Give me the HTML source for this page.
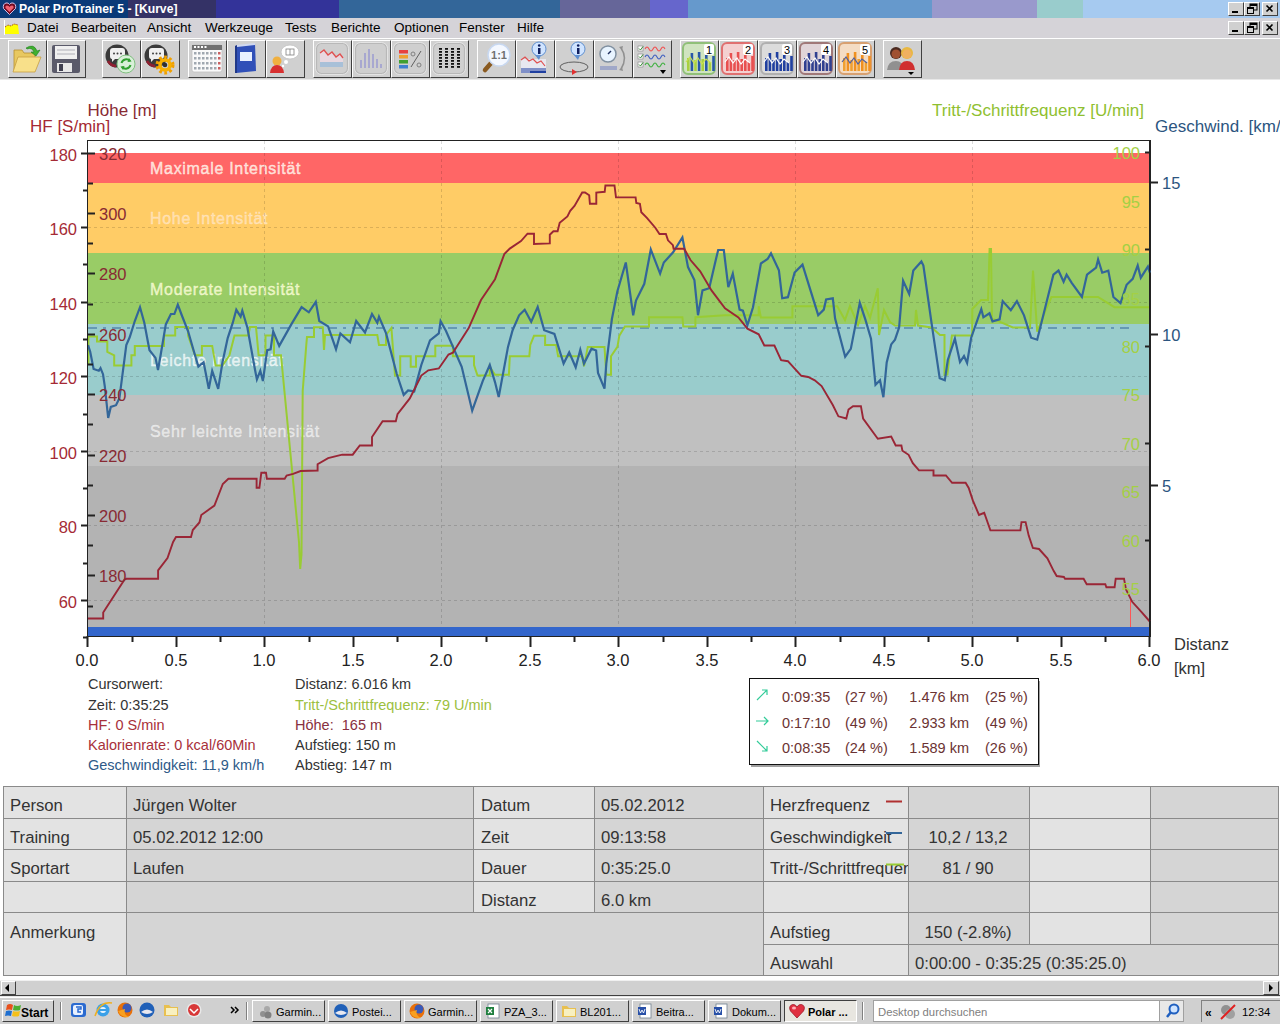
<!DOCTYPE html><html><head><meta charset="utf-8"><style>
html,body{margin:0;padding:0;width:1280px;height:1024px;overflow:hidden;background:#fff;font-family:"Liberation Sans", sans-serif;}
.t{position:absolute;white-space:nowrap;line-height:1;}
.r{position:absolute;box-sizing:border-box;}
svg{position:absolute;left:0;top:0;}
</style></head><body>
<div class="r" style="left:0px;top:0px;width:128px;height:18px;background:#0a3a78;"></div>
<div class="r" style="left:128px;top:0px;width:88px;height:18px;background:#343266;"></div>
<div class="r" style="left:216px;top:0px;width:123px;height:18px;background:#333399;"></div>
<div class="r" style="left:339px;top:0px;width:221px;height:18px;background:#336699;"></div>
<div class="r" style="left:560px;top:0px;width:90px;height:18px;background:#666699;"></div>
<div class="r" style="left:650px;top:0px;width:38px;height:18px;background:#6666cc;"></div>
<div class="r" style="left:688px;top:0px;width:244px;height:18px;background:#6699cc;"></div>
<div class="r" style="left:932px;top:0px;width:105px;height:18px;background:#9999cc;"></div>
<div class="r" style="left:1037px;top:0px;width:46px;height:18px;background:#99cccc;"></div>
<div class="r" style="left:1083px;top:0px;width:197px;height:18px;background:#a6caf0;"></div>
<svg width="18" height="18" style="left:0px;top:0px"><path d="M9.5 14.5 L3.5 8.5 Q2.5 4 6 3 Q8.5 2.5 9.5 4.5 Q10.5 2.5 13 3 Q16.5 4 15.5 8.5 Z" fill="#700a20" stroke="#d0c0e8" stroke-width="1"/><path d="M9.5 12 L5.5 8 Q5 5.5 7 5.5 Q9 5.5 9.5 7 Q10 5.5 12 5.5 Q14 5.5 13.5 8 Z" fill="#f06070"/></svg>
<div class="t" style="left:19px;top:3.17px;font-size:12.2px;color:#fff;font-weight:bold;">Polar ProTrainer 5 - [Kurve]</div>
<div class="r" style="left:0px;top:18px;width:1280px;height:20px;background:#d5d3d8;"></div>
<div class="r" style="left:1228px;top:2px;width:16px;height:14px;background:#d0d0d0;border-top:1px solid #fff;border-left:1px solid #fff;border-right:1px solid #404040;border-bottom:1px solid #404040;"></div>
<div class="r" style="left:1244px;top:2px;width:16px;height:14px;background:#d0d0d0;border-top:1px solid #fff;border-left:1px solid #fff;border-right:1px solid #404040;border-bottom:1px solid #404040;"></div>
<div class="r" style="left:1262px;top:2px;width:16px;height:14px;background:#d0d0d0;border-top:1px solid #fff;border-left:1px solid #fff;border-right:1px solid #404040;border-bottom:1px solid #404040;"></div>
<svg width="60" height="16" style="left:1220px;top:2px"><rect x="12" y="9" width="6" height="2" fill="#000"/><rect x="30" y="2" width="7" height="6" fill="none" stroke="#000" stroke-width="1"/><rect x="30" y="2" width="7" height="2" fill="#000"/><rect x="27.5" y="5.5" width="6" height="6" fill="#d0d0d0" stroke="#000" stroke-width="1"/><rect x="27" y="5" width="7" height="2" fill="#000"/><path d="M46.5 3.5 L52.5 9.5 M52.5 3.5 L46.5 9.5" stroke="#000" stroke-width="1.6"/></svg>
<div class="r" style="left:1228px;top:21px;width:16px;height:14px;background:#d0d0d0;border-top:1px solid #fff;border-left:1px solid #fff;border-right:1px solid #404040;border-bottom:1px solid #404040;"></div>
<div class="r" style="left:1244px;top:21px;width:16px;height:14px;background:#d0d0d0;border-top:1px solid #fff;border-left:1px solid #fff;border-right:1px solid #404040;border-bottom:1px solid #404040;"></div>
<div class="r" style="left:1262px;top:21px;width:16px;height:14px;background:#d0d0d0;border-top:1px solid #fff;border-left:1px solid #fff;border-right:1px solid #404040;border-bottom:1px solid #404040;"></div>
<svg width="60" height="16" style="left:1220px;top:21px"><rect x="12" y="9" width="6" height="2" fill="#000"/><rect x="30" y="2" width="7" height="6" fill="none" stroke="#000" stroke-width="1"/><rect x="30" y="2" width="7" height="2" fill="#000"/><rect x="27.5" y="5.5" width="6" height="6" fill="#d0d0d0" stroke="#000" stroke-width="1"/><rect x="27" y="5" width="7" height="2" fill="#000"/><path d="M46.5 3.5 L52.5 9.5 M52.5 3.5 L46.5 9.5" stroke="#000" stroke-width="1.6"/></svg>
<div class="r" style="left:0px;top:38px;width:1280px;height:1px;background:#ffffff;"></div>
<svg width="22" height="18" style="left:0px;top:19px"><rect x="4" y="1" width="1" height="15" fill="#fff"/><path d="M5 8 L8 6 L11 7 L14 5 L18 6 L19 15 L5 15 Z" fill="#ffff00"/><path d="M5 8 L8 6 L11 7 L14 5 L18 6" stroke="#993300" stroke-width="1" fill="none" stroke-dasharray="1 1"/></svg>
<div class="t" style="left:27px;top:20.77px;font-size:13.5px;color:#000;font-weight:normal;">Datei</div>
<div class="t" style="left:71px;top:20.77px;font-size:13.5px;color:#000;font-weight:normal;">Bearbeiten</div>
<div class="t" style="left:147px;top:20.77px;font-size:13.5px;color:#000;font-weight:normal;">Ansicht</div>
<div class="t" style="left:205px;top:20.77px;font-size:13.5px;color:#000;font-weight:normal;">Werkzeuge</div>
<div class="t" style="left:285px;top:20.77px;font-size:13.5px;color:#000;font-weight:normal;">Tests</div>
<div class="t" style="left:331px;top:20.77px;font-size:13.5px;color:#000;font-weight:normal;">Berichte</div>
<div class="t" style="left:394px;top:20.77px;font-size:13.5px;color:#000;font-weight:normal;">Optionen</div>
<div class="t" style="left:459px;top:20.77px;font-size:13.5px;color:#000;font-weight:normal;">Fenster</div>
<div class="t" style="left:517px;top:20.77px;font-size:13.5px;color:#000;font-weight:normal;">Hilfe</div>
<div class="r" style="left:0px;top:39px;width:1280px;height:41px;background:#d0d0d0;"></div>
<div class="r" style="left:0px;top:79px;width:1280px;height:1px;background:#e8e8e8;"></div>
<div class="r" style="left:8px;top:40px;width:39px;height:38px;background:#d0d0d0;border-top:1px solid #fff;border-left:1px solid #fff;border-right:1px solid #404040;border-bottom:1px solid #404040;"></div>
<div class="r" style="left:47px;top:40px;width:39px;height:38px;background:#d0d0d0;border-top:1px solid #fff;border-left:1px solid #fff;border-right:1px solid #404040;border-bottom:1px solid #404040;"></div>
<div class="r" style="left:102px;top:40px;width:39px;height:38px;background:#d0d0d0;border-top:1px solid #fff;border-left:1px solid #fff;border-right:1px solid #404040;border-bottom:1px solid #404040;"></div>
<div class="r" style="left:141px;top:40px;width:39px;height:38px;background:#d0d0d0;border-top:1px solid #fff;border-left:1px solid #fff;border-right:1px solid #404040;border-bottom:1px solid #404040;"></div>
<div class="r" style="left:188px;top:40px;width:39px;height:38px;background:#d0d0d0;border-top:1px solid #fff;border-left:1px solid #fff;border-right:1px solid #404040;border-bottom:1px solid #404040;"></div>
<div class="r" style="left:227px;top:40px;width:39px;height:38px;background:#d0d0d0;border-top:1px solid #fff;border-left:1px solid #fff;border-right:1px solid #404040;border-bottom:1px solid #404040;"></div>
<div class="r" style="left:266px;top:40px;width:39px;height:38px;background:#d0d0d0;border-top:1px solid #fff;border-left:1px solid #fff;border-right:1px solid #404040;border-bottom:1px solid #404040;"></div>
<div class="r" style="left:313px;top:40px;width:39px;height:38px;background:#d0d0d0;border-top:1px solid #fff;border-left:1px solid #fff;border-right:1px solid #404040;border-bottom:1px solid #404040;"></div>
<div class="r" style="left:352px;top:40px;width:39px;height:38px;background:#d0d0d0;border-top:1px solid #fff;border-left:1px solid #fff;border-right:1px solid #404040;border-bottom:1px solid #404040;"></div>
<div class="r" style="left:391px;top:40px;width:39px;height:38px;background:#d0d0d0;border-top:1px solid #fff;border-left:1px solid #fff;border-right:1px solid #404040;border-bottom:1px solid #404040;"></div>
<div class="r" style="left:430px;top:40px;width:39px;height:38px;background:#d0d0d0;border-top:1px solid #fff;border-left:1px solid #fff;border-right:1px solid #404040;border-bottom:1px solid #404040;"></div>
<div class="r" style="left:477px;top:40px;width:39px;height:38px;background:#d0d0d0;border-top:1px solid #fff;border-left:1px solid #fff;border-right:1px solid #404040;border-bottom:1px solid #404040;"></div>
<div class="r" style="left:516px;top:40px;width:39px;height:38px;background:#d0d0d0;border-top:1px solid #fff;border-left:1px solid #fff;border-right:1px solid #404040;border-bottom:1px solid #404040;"></div>
<div class="r" style="left:555px;top:40px;width:39px;height:38px;background:#d0d0d0;border-top:1px solid #fff;border-left:1px solid #fff;border-right:1px solid #404040;border-bottom:1px solid #404040;"></div>
<div class="r" style="left:594px;top:40px;width:39px;height:38px;background:#d0d0d0;border-top:1px solid #fff;border-left:1px solid #fff;border-right:1px solid #404040;border-bottom:1px solid #404040;"></div>
<div class="r" style="left:633px;top:40px;width:39px;height:38px;background:#d0d0d0;border-top:1px solid #fff;border-left:1px solid #fff;border-right:1px solid #404040;border-bottom:1px solid #404040;"></div>
<div class="r" style="left:680px;top:40px;width:39px;height:38px;background:#d0d0d0;border-top:1px solid #fff;border-left:1px solid #fff;border-right:1px solid #404040;border-bottom:1px solid #404040;"></div>
<div class="r" style="left:719px;top:40px;width:39px;height:38px;background:#d0d0d0;border-top:1px solid #fff;border-left:1px solid #fff;border-right:1px solid #404040;border-bottom:1px solid #404040;"></div>
<div class="r" style="left:758px;top:40px;width:39px;height:38px;background:#d0d0d0;border-top:1px solid #fff;border-left:1px solid #fff;border-right:1px solid #404040;border-bottom:1px solid #404040;"></div>
<div class="r" style="left:797px;top:40px;width:39px;height:38px;background:#d0d0d0;border-top:1px solid #fff;border-left:1px solid #fff;border-right:1px solid #404040;border-bottom:1px solid #404040;"></div>
<div class="r" style="left:836px;top:40px;width:39px;height:38px;background:#d0d0d0;border-top:1px solid #fff;border-left:1px solid #fff;border-right:1px solid #404040;border-bottom:1px solid #404040;"></div>
<div class="r" style="left:883px;top:40px;width:39px;height:38px;background:#d0d0d0;border-top:1px solid #fff;border-left:1px solid #fff;border-right:1px solid #404040;border-bottom:1px solid #404040;"></div>
<svg width="1280" height="90" style="left:0;top:0"><g transform="translate(8,40)"><path d="M6 10 L14 10 L16 13 L27 13 L27 30 L6 30 Z" fill="#e8c860" stroke="#b89030" stroke-width="0.8"/><path d="M5 32 L10 17 L33 17 L27 32 Z" fill="#f8e08a" stroke="#c8a040" stroke-width="0.8"/><path d="M18 8 Q26 3 29 11 L32 10 L28 16 L23 12 L26 12 Q24 7 19 9 Z" fill="#40b030" stroke="#208020" stroke-width="0.6"/></g><g transform="translate(47,40)"><rect x="5" y="5" width="28" height="28" rx="2" fill="#5a5a6a"/><rect x="8" y="6" width="22" height="13" fill="#f0f0f0"/><line x1="10" y1="10" x2="28" y2="10" stroke="#b0b0b8" stroke-width="1"/><line x1="10" y1="14" x2="28" y2="14" stroke="#b0b0b8" stroke-width="1"/><rect x="10" y="23" width="15" height="9" fill="#e8e8e8"/><rect x="12" y="24" width="4" height="7" fill="#404050"/></g><g transform="translate(102,40)"><circle cx="15" cy="16" r="11.5" fill="#3a3a3a"/><path d="M8 11 Q8 8 11 8 L20 8 Q23 8 23 11 L23 16 Q23 19 20 19 L13 19 L10 22 L10 19 Q8 19 8 16 Z" fill="#f0f0f0"/><circle cx="12" cy="13.5" r="1" fill="#404040"/><circle cx="15.5" cy="13.5" r="1" fill="#404040"/><circle cx="19" cy="13.5" r="1" fill="#404040"/><path d="M6 21 Q9 26 14 26" stroke="#902030" stroke-width="2.5" fill="none"/><circle cx="24" cy="24" r="9" fill="#d8f0d8" stroke="#80c080" stroke-width="1"/><path d="M19.5 23 A5 5 0 0 1 28 21 M28.5 25 A5 5 0 0 1 20 27" stroke="#30a030" stroke-width="2" fill="none"/><path d="M27 18 L29.5 21.5 L25.5 22 Z M21 30 L18.5 26.5 L22.5 26 Z" fill="#30a030"/></g><g transform="translate(141,40)"><circle cx="15" cy="16" r="11.5" fill="#3a3a3a"/><path d="M8 11 Q8 8 11 8 L20 8 Q23 8 23 11 L23 16 Q23 19 20 19 L13 19 L10 22 L10 19 Q8 19 8 16 Z" fill="#f0f0f0"/><circle cx="12" cy="13.5" r="1" fill="#404040"/><circle cx="15.5" cy="13.5" r="1" fill="#404040"/><circle cx="19" cy="13.5" r="1" fill="#404040"/><path d="M6 21 Q9 26 14 26" stroke="#902030" stroke-width="2.5" fill="none"/><circle cx="24" cy="25" r="7.5" fill="none" stroke="#f0a000" stroke-width="4" stroke-dasharray="2.6 2.3"/><circle cx="24" cy="25" r="5" fill="none" stroke="#f8b000" stroke-width="3.5"/><circle cx="24" cy="25" r="2.3" fill="#303030"/></g><g transform="translate(188,40)"><rect x="4" y="5" width="30" height="27" rx="2" fill="#fafafa" stroke="#c0c0c0" stroke-width="0.8"/><rect x="4" y="5" width="30" height="5" fill="#707070"/><rect x="6.0" y="6" width="2" height="2" fill="#fff"/><rect x="9.5" y="6" width="2" height="2" fill="#fff"/><rect x="13.0" y="6" width="2" height="2" fill="#fff"/><rect x="16.5" y="6" width="2" height="2" fill="#fff"/><rect x="6" y="12" width="2.5" height="2.5" fill="#a0a8b0"/><rect x="10" y="12" width="2.5" height="2.5" fill="#a0a8b0"/><rect x="14" y="12" width="2.5" height="2.5" fill="#a0a8b0"/><rect x="18" y="12" width="2.5" height="2.5" fill="#a0a8b0"/><rect x="22" y="12" width="2.5" height="2.5" fill="#a0a8b0"/><rect x="26" y="12" width="2.5" height="2.5" fill="#a0a8b0"/><rect x="30" y="12" width="2.5" height="2.5" fill="#c86060"/><rect x="6" y="17" width="2.5" height="2.5" fill="#a0a8b0"/><rect x="10" y="17" width="2.5" height="2.5" fill="#a0a8b0"/><rect x="14" y="17" width="2.5" height="2.5" fill="#a0a8b0"/><rect x="18" y="17" width="2.5" height="2.5" fill="#a0a8b0"/><rect x="22" y="17" width="2.5" height="2.5" fill="#a0a8b0"/><rect x="26" y="17" width="2.5" height="2.5" fill="#a0a8b0"/><rect x="30" y="17" width="2.5" height="2.5" fill="#c86060"/><rect x="6" y="22" width="2.5" height="2.5" fill="#a0a8b0"/><rect x="10" y="22" width="2.5" height="2.5" fill="#a0a8b0"/><rect x="14" y="22" width="2.5" height="2.5" fill="#a0a8b0"/><rect x="18" y="22" width="2.5" height="2.5" fill="#a0a8b0"/><rect x="22" y="22" width="2.5" height="2.5" fill="#a0a8b0"/><rect x="26" y="22" width="2.5" height="2.5" fill="#a0a8b0"/><rect x="30" y="22" width="2.5" height="2.5" fill="#c86060"/><rect x="6" y="27" width="2.5" height="2.5" fill="#a0a8b0"/><rect x="10" y="27" width="2.5" height="2.5" fill="#a0a8b0"/><rect x="14" y="27" width="2.5" height="2.5" fill="#a0a8b0"/><rect x="18" y="27" width="2.5" height="2.5" fill="#a0a8b0"/><rect x="22" y="27" width="2.5" height="2.5" fill="#a0a8b0"/><rect x="26" y="27" width="2.5" height="2.5" fill="#a0a8b0"/><rect x="30" y="27" width="2.5" height="2.5" fill="#c86060"/></g><g transform="translate(227,40)"><path d="M8 6 L28 4 L29 31 L9 33 Z" fill="#3050b8"/><path d="M8 6 L10 5 L10 33 L8 33 Z" fill="#203888"/><rect x="13" y="12" width="12" height="9" fill="#e8f0ff"/><path d="M10 5 L28 3 L28 5 L10 7 Z" fill="#d0d8f0"/></g><g transform="translate(266,40)"><ellipse cx="24" cy="12" rx="9" ry="7" fill="#fff" stroke="#c0c0c0" stroke-width="0.8"/><rect x="20" y="9" width="8" height="6" fill="#fff" stroke="#808080" stroke-width="0.8"/><line x1="24" y1="9" x2="24" y2="15" stroke="#808080" stroke-width="0.8"/><circle cx="20" cy="22" r="2" fill="#fff"/><circle cx="17" cy="26" r="1.2" fill="#fff"/><circle cx="11" cy="21" r="4.5" fill="#f0b040"/><path d="M4 33 Q5 25 11 25 Q17 25 18 33 Z" fill="#d83030"/></g><g transform="translate(313,40)"><rect x="3.5" y="3.5" width="31" height="30" rx="5" fill="#cfcfcf" stroke="#b8b8b8" stroke-width="1.2"/><rect x="2.5" y="2.5" width="33" height="32" rx="6" fill="none" stroke="#e8e8e8" stroke-width="0.8"/><path d="M7 13 L11 10 L15 15 L19 12 L23 17 L27 14 L30 18 L30 27 L7 27 Z" fill="#e8d8e0"/><path d="M7 22 L30 22 L30 27 L7 27 Z" fill="#a8c0d8"/><polyline points="7,13 11,10 15,15 19,12 23,17 27,14 30,18" fill="none" stroke="#e05050" stroke-width="1.3"/></g><g transform="translate(352,40)"><rect x="3.5" y="3.5" width="31" height="30" rx="5" fill="#cfcfcf" stroke="#b8b8b8" stroke-width="1.2"/><rect x="2.5" y="2.5" width="33" height="32" rx="6" fill="none" stroke="#e8e8e8" stroke-width="0.8"/><rect x="8" y="20" width="2" height="8" fill="#a8a8d0"/><rect x="12" y="13" width="2" height="15" fill="#a8a8d0"/><rect x="16" y="9" width="2" height="19" fill="#a8a8d0"/><rect x="20" y="14" width="2" height="14" fill="#a8a8d0"/><rect x="24" y="19" width="2" height="9" fill="#a8a8d0"/><rect x="28" y="24" width="2" height="4" fill="#a8a8d0"/></g><g transform="translate(391,40)"><rect x="3.5" y="3.5" width="31" height="30" rx="5" fill="#cfcfcf" stroke="#b8b8b8" stroke-width="1.2"/><rect x="2.5" y="2.5" width="33" height="32" rx="6" fill="none" stroke="#e8e8e8" stroke-width="0.8"/><rect x="8" y="10" width="9" height="3.5" fill="#e84040"/><rect x="8" y="15" width="9" height="3.5" fill="#f0a030"/><rect x="8" y="20" width="9" height="3.5" fill="#40a030"/><rect x="8" y="25" width="9" height="3.5" fill="#4080d0"/><line x1="20" y1="27" x2="30" y2="11" stroke="#606060" stroke-width="1"/><circle cx="22" cy="14" r="2" fill="none" stroke="#808080"/><circle cx="28" cy="25" r="2" fill="none" stroke="#808080"/></g><g transform="translate(430,40)"><rect x="3.5" y="3.5" width="31" height="30" rx="5" fill="#cfcfcf" stroke="#b8b8b8" stroke-width="1.2"/><rect x="2.5" y="2.5" width="33" height="32" rx="6" fill="none" stroke="#e8e8e8" stroke-width="0.8"/><rect x="9" y="8" width="3" height="1.8" fill="#111"/><rect x="9" y="11" width="3" height="1.8" fill="#111"/><rect x="9" y="14" width="3" height="1.8" fill="#111"/><rect x="9" y="17" width="3" height="1.8" fill="#111"/><rect x="9" y="20" width="3" height="1.8" fill="#111"/><rect x="9" y="23" width="3" height="1.8" fill="#111"/><rect x="9" y="26" width="3" height="1.8" fill="#111"/><rect x="15" y="8" width="3" height="1.8" fill="#111"/><rect x="15" y="11" width="3" height="1.8" fill="#111"/><rect x="15" y="14" width="3" height="1.8" fill="#111"/><rect x="15" y="17" width="3" height="1.8" fill="#111"/><rect x="15" y="20" width="3" height="1.8" fill="#111"/><rect x="15" y="23" width="3" height="1.8" fill="#111"/><rect x="15" y="26" width="3" height="1.8" fill="#111"/><rect x="21" y="8" width="3" height="1.8" fill="#111"/><rect x="21" y="11" width="3" height="1.8" fill="#111"/><rect x="21" y="14" width="3" height="1.8" fill="#111"/><rect x="21" y="17" width="3" height="1.8" fill="#111"/><rect x="21" y="20" width="3" height="1.8" fill="#111"/><rect x="21" y="23" width="3" height="1.8" fill="#111"/><rect x="21" y="26" width="3" height="1.8" fill="#111"/><rect x="27" y="8" width="3" height="1.8" fill="#111"/><rect x="27" y="11" width="3" height="1.8" fill="#111"/><rect x="27" y="14" width="3" height="1.8" fill="#111"/><rect x="27" y="17" width="3" height="1.8" fill="#111"/><rect x="27" y="20" width="3" height="1.8" fill="#111"/><rect x="27" y="23" width="3" height="1.8" fill="#111"/><rect x="27" y="26" width="3" height="1.8" fill="#111"/></g><g transform="translate(477,40)"><line x1="8" y1="30" x2="15" y2="22" stroke="#8a5a20" stroke-width="4.5" stroke-linecap="round"/><circle cx="22" cy="15" r="11" fill="#f4f8ff" stroke="#c8d8f0" stroke-width="1.5"/><text x="22" y="19" font-size="11" font-family="Liberation Sans" font-weight="bold" fill="#707070" text-anchor="middle">1:1</text></g><g transform="translate(516,40)"><rect x="5" y="19" width="25" height="14" fill="#e8e8f0"/><rect x="5" y="28" width="25" height="5" fill="#8090c8"/><rect x="14" y="31" width="16" height="2" fill="#2040a0"/><polyline points="5,20 9,17 13,21 17,19 21,23 25,21 29,26" fill="none" stroke="#e05050" stroke-width="1.2"/><circle cx="23" cy="9" r="7" fill="#d0e4ff" stroke="#6090d0" stroke-width="1"/><path d="M19 15 L23 20 L25 15 Z" fill="#6090d0"/><rect x="22" y="8" width="2.5" height="6" fill="#102060"/><circle cx="23.2" cy="5.5" r="1.3" fill="#102060"/></g><g transform="translate(555,40)"><ellipse cx="19" cy="27" rx="14" ry="5" fill="none" stroke="#606060" stroke-width="1"/><path d="M17 29 L22 32 L17 35 Z" fill="#e03030"/><circle cx="23" cy="9" r="7" fill="#d0e4ff" stroke="#6090d0" stroke-width="1"/><path d="M19 15 L23 20 L25 15 Z" fill="#6090d0"/><rect x="22" y="8" width="2.5" height="6" fill="#102060"/><circle cx="23.2" cy="5.5" r="1.3" fill="#102060"/></g><g transform="translate(594,40)"><circle cx="14" cy="14" r="8" fill="#e8f4ff" stroke="#8090a0" stroke-width="1.5"/><line x1="14" y1="14" x2="17" y2="11" stroke="#203060" stroke-width="1.5"/><rect x="6" y="26" width="17" height="4" fill="#a0a8c8"/><path d="M27 8 Q34 18 27 29" fill="none" stroke="#909090" stroke-width="1.5"/><path d="M25 7 L29 6 L28 10 Z M25 30 L29 31 L28 27 Z" fill="#909090"/></g><g transform="translate(633,40)"><rect x="5" y="6" width="5" height="5" fill="#fff" stroke="#808080" stroke-width="0.6"/><path d="M6 8.5 L7.5 10 L10 6.5" stroke="#208020" fill="none" stroke-width="0.9"/><path d="M12 9 Q14 5 16 9 T20 9 T24 9 T28 9 T32 9" stroke="#f05050" fill="none" stroke-width="1.1"/><rect x="5" y="14" width="5" height="5" fill="#fff" stroke="#808080" stroke-width="0.6"/><path d="M6 16.5 L7.5 18 L10 14.5" stroke="#208020" fill="none" stroke-width="0.9"/><path d="M12 17 Q14 13 16 17 T20 17 T24 17 T28 17 T32 17" stroke="#4060c0" fill="none" stroke-width="1.1"/><rect x="5" y="22" width="5" height="5" fill="#fff" stroke="#808080" stroke-width="0.6"/><path d="M6 24.5 L7.5 26 L10 22.5" stroke="#208020" fill="none" stroke-width="0.9"/><path d="M12 25 Q14 21 16 25 T20 25 T24 25 T28 25 T32 25" stroke="#40b040" fill="none" stroke-width="1.1"/><path d="M27 30 L33 30 L30 34 Z" fill="#000"/></g><g transform="translate(680,40)"><rect x="3" y="3" width="32" height="31" rx="5" fill="#d0e4c0" stroke="#90c078" stroke-width="2"/><rect x="7.0" y="18" width="2.6" height="13" fill="#a8d040"/><rect x="10.6" y="13" width="2.6" height="18" fill="#2858a8"/><rect x="14.2" y="20" width="2.6" height="11" fill="#a8d040"/><rect x="17.8" y="12" width="2.6" height="19" fill="#2858a8"/><rect x="21.4" y="19" width="2.6" height="12" fill="#a8d040"/><rect x="25.0" y="15" width="2.6" height="16" fill="#2858a8"/><rect x="28.6" y="22" width="2.6" height="9" fill="#a8d040"/><rect x="32.2" y="16" width="2.6" height="15" fill="#2858a8"/><polyline points="6,22 10,17 14,23 18,18 22,24 26,19 31,23" fill="none" stroke="#c8e050" stroke-width="1.2"/><rect x="24" y="4" width="10" height="11" rx="2" fill="#fff"/><text x="29" y="13.5" font-size="11" font-family="Liberation Sans" fill="#000" text-anchor="middle">1</text></g><g transform="translate(719,40)"><rect x="3" y="3" width="32" height="31" rx="5" fill="#f4d0d0" stroke="#e07070" stroke-width="2"/><rect x="7.0" y="18" width="2.6" height="13" fill="#e85050"/><rect x="10.6" y="13" width="2.6" height="18" fill="#e85050"/><rect x="14.2" y="20" width="2.6" height="11" fill="#e85050"/><rect x="17.8" y="12" width="2.6" height="19" fill="#e85050"/><rect x="21.4" y="19" width="2.6" height="12" fill="#e85050"/><rect x="25.0" y="15" width="2.6" height="16" fill="#e85050"/><rect x="28.6" y="22" width="2.6" height="9" fill="#e85050"/><rect x="32.2" y="16" width="2.6" height="15" fill="#e85050"/><polyline points="6,22 10,17 14,23 18,18 22,24 26,19 31,23" fill="none" stroke="#ffffff" stroke-width="1.2"/><rect x="24" y="4" width="10" height="11" rx="2" fill="#fff"/><text x="29" y="13.5" font-size="11" font-family="Liberation Sans" fill="#000" text-anchor="middle">2</text></g><g transform="translate(758,40)"><rect x="3" y="3" width="32" height="31" rx="5" fill="#dcdcdc" stroke="#b0b0b0" stroke-width="2"/><rect x="7.0" y="18" width="2.6" height="13" fill="#2040a0"/><rect x="10.6" y="13" width="2.6" height="18" fill="#2040a0"/><rect x="14.2" y="20" width="2.6" height="11" fill="#2040a0"/><rect x="17.8" y="12" width="2.6" height="19" fill="#2040a0"/><rect x="21.4" y="19" width="2.6" height="12" fill="#2040a0"/><rect x="25.0" y="15" width="2.6" height="16" fill="#2040a0"/><rect x="28.6" y="22" width="2.6" height="9" fill="#2040a0"/><rect x="32.2" y="16" width="2.6" height="15" fill="#2040a0"/><polyline points="6,22 10,17 14,23 18,18 22,24 26,19 31,23" fill="none" stroke="#ffffff" stroke-width="1.2"/><rect x="24" y="4" width="10" height="11" rx="2" fill="#fff"/><text x="29" y="13.5" font-size="11" font-family="Liberation Sans" fill="#000" text-anchor="middle">3</text></g><g transform="translate(797,40)"><rect x="3" y="3" width="32" height="31" rx="5" fill="#e0d4d8" stroke="#a07878" stroke-width="2"/><rect x="7.0" y="18" width="2.6" height="13" fill="#304090"/><rect x="10.6" y="13" width="2.6" height="18" fill="#304090"/><rect x="14.2" y="20" width="2.6" height="11" fill="#304090"/><rect x="17.8" y="12" width="2.6" height="19" fill="#304090"/><rect x="21.4" y="19" width="2.6" height="12" fill="#304090"/><rect x="25.0" y="15" width="2.6" height="16" fill="#304090"/><rect x="28.6" y="22" width="2.6" height="9" fill="#304090"/><rect x="32.2" y="16" width="2.6" height="15" fill="#304090"/><polyline points="6,22 10,17 14,23 18,18 22,24 26,19 31,23" fill="none" stroke="#ffffff" stroke-width="1.2"/><rect x="24" y="4" width="10" height="11" rx="2" fill="#fff"/><text x="29" y="13.5" font-size="11" font-family="Liberation Sans" fill="#000" text-anchor="middle">4</text></g><g transform="translate(836,40)"><rect x="3" y="3" width="32" height="31" rx="5" fill="#f4dcc4" stroke="#d8a070" stroke-width="2"/><rect x="7.0" y="18" width="2.6" height="13" fill="#f0a030"/><rect x="10.6" y="13" width="2.6" height="18" fill="#f09020"/><rect x="14.2" y="20" width="2.6" height="11" fill="#f0a030"/><rect x="17.8" y="12" width="2.6" height="19" fill="#f09020"/><rect x="21.4" y="19" width="2.6" height="12" fill="#f0a030"/><rect x="25.0" y="15" width="2.6" height="16" fill="#f09020"/><rect x="28.6" y="22" width="2.6" height="9" fill="#f0a030"/><rect x="32.2" y="16" width="2.6" height="15" fill="#f09020"/><polyline points="6,22 10,17 14,23 18,18 22,24 26,19 31,23" fill="none" stroke="#5060a0" stroke-width="1.2"/><rect x="24" y="4" width="10" height="11" rx="2" fill="#fff"/><text x="29" y="13.5" font-size="11" font-family="Liberation Sans" fill="#000" text-anchor="middle">5</text></g><g transform="translate(883,40)"><circle cx="13" cy="13" r="6" fill="#4a2a20"/><circle cx="13" cy="14" r="4.5" fill="#a05030"/><path d="M4 30 Q5 21 13 21 Q20 21 21 30 Z" fill="#909090"/><circle cx="24" cy="13" r="6" fill="#e8b840"/><circle cx="24" cy="14" r="4.5" fill="#f0b060"/><path d="M16 30 Q17 21 24 21 Q31 21 32 30 Z" fill="#d03030"/><path d="M25 32 L31 32 L28 35 Z" fill="#000"/></g></svg>
<div class="r" style="left:87px;top:140px;width:1064px;height:497px;background:#fff;border:1px solid #222;"></div>
<div class="r" style="left:88px;top:153px;width:1062px;height:30px;background:#ff6666;"></div>
<div class="r" style="left:88px;top:183px;width:1062px;height:70px;background:#ffcc66;"></div>
<div class="r" style="left:88px;top:253px;width:1062px;height:71px;background:#99cc66;"></div>
<div class="r" style="left:88px;top:324px;width:1062px;height:71px;background:#99cccc;"></div>
<div class="r" style="left:88px;top:395px;width:1062px;height:71px;background:#c0c0c0;"></div>
<div class="r" style="left:88px;top:466px;width:1062px;height:161px;background:#b3b3b3;"></div>
<div class="r" style="left:88px;top:627px;width:1062px;height:9px;background:#3366cc;"></div>
<div class="t" style="left:150px;top:161.46px;font-size:16px;color:rgba(255,240,230,0.85);font-weight:normal;letter-spacing:0.7px;-webkit-text-stroke:0.45px rgba(255,240,230,0.85);">Maximale Intensit&auml;t</div>
<div class="t" style="left:150px;top:211.46px;font-size:16px;color:rgba(255,240,230,0.5);font-weight:normal;letter-spacing:0.7px;-webkit-text-stroke:0.45px rgba(255,240,230,0.5);">Hohe Intensit&auml;t</div>
<div class="t" style="left:150px;top:282.46px;font-size:16px;color:rgba(255,255,220,0.75);font-weight:normal;letter-spacing:0.7px;-webkit-text-stroke:0.45px rgba(255,255,220,0.75);">Moderate Intensit&auml;t</div>
<div class="t" style="left:150px;top:353.46px;font-size:16px;color:rgba(255,255,255,0.7);font-weight:normal;letter-spacing:0.7px;-webkit-text-stroke:0.45px rgba(255,255,255,0.7);">Leichte Intensit&auml;t</div>
<div class="t" style="left:150px;top:424.46px;font-size:16px;color:rgba(255,255,255,0.55);font-weight:normal;letter-spacing:0.7px;-webkit-text-stroke:0.45px rgba(255,255,255,0.55);">Sehr leichte Intensit&auml;t</div>
<svg width="1280" height="1024" style="left:0;top:0">
<line x1="88" y1="227.5" x2="1150" y2="227.5" stroke="#000" stroke-opacity="0.14" stroke-width="1" stroke-dasharray="3 3"/>
<line x1="88" y1="302.5" x2="1150" y2="302.5" stroke="#000" stroke-opacity="0.14" stroke-width="1" stroke-dasharray="3 3"/>
<line x1="88" y1="376.5" x2="1150" y2="376.5" stroke="#000" stroke-opacity="0.14" stroke-width="1" stroke-dasharray="3 3"/>
<line x1="88" y1="451.5" x2="1150" y2="451.5" stroke="#000" stroke-opacity="0.14" stroke-width="1" stroke-dasharray="3 3"/>
<line x1="88" y1="525.5" x2="1150" y2="525.5" stroke="#000" stroke-opacity="0.14" stroke-width="1" stroke-dasharray="3 3"/>
<line x1="88" y1="600.5" x2="1150" y2="600.5" stroke="#000" stroke-opacity="0.14" stroke-width="1" stroke-dasharray="3 3"/>
<line x1="264.5" y1="141" x2="264.5" y2="627" stroke="#000" stroke-opacity="0.14" stroke-width="1" stroke-dasharray="3 3"/>
<line x1="441.5" y1="141" x2="441.5" y2="627" stroke="#000" stroke-opacity="0.14" stroke-width="1" stroke-dasharray="3 3"/>
<line x1="618.5" y1="141" x2="618.5" y2="627" stroke="#000" stroke-opacity="0.14" stroke-width="1" stroke-dasharray="3 3"/>
<line x1="795.5" y1="141" x2="795.5" y2="627" stroke="#000" stroke-opacity="0.14" stroke-width="1" stroke-dasharray="3 3"/>
<line x1="972.5" y1="141" x2="972.5" y2="627" stroke="#000" stroke-opacity="0.14" stroke-width="1" stroke-dasharray="3 3"/>
<line x1="88" y1="328" x2="1130" y2="328" stroke="#336699" stroke-width="1.2" stroke-dasharray="9 6 3 6"/>
<polyline points="88.4,364.0 88.4,336.4 97.0,336.4 97.0,341.6 107.3,341.6 107.3,351.9 114.2,355.3 114.2,365.6 131.4,365.6 131.4,355.3 134.8,355.3 134.8,345.9 164.0,345.9 164.0,335.5 175.2,335.5 175.2,327.0 188.1,327.0 188.1,335.5 195.0,355.3 201.9,355.3 201.9,345.9 212.2,345.9 215.6,365.6 222.5,365.6 229.4,355.3 234.5,335.5 248.3,335.5 250.0,327.0 256.0,327.0 258.6,355.3 265.5,355.3 265.5,335.5 274.0,335.5 274.0,355.3 281.0,355.3 284.4,391.0 299.0,542.2 300.2,569.0 301.5,554.4 302.7,391.0 306.3,344.6 307.0,337.0 314.0,337.0 314.0,327.2 322.8,327.2 324.0,350.0 325.0,335.0 377.3,335.0 379.0,345.0 386.0,345.0 386.0,335.0 391.4,328.0 395.0,375.6 400.2,375.6 400.2,356.2 410.7,356.2 410.7,366.8 416.0,366.8 416.0,356.2 435.3,356.2 435.3,345.7 452.9,345.7 452.9,356.2 474.0,356.2 474.0,365.0 477.5,375.6 489.8,375.6 489.8,366.8 495.0,374.7 508.9,374.7 509.8,356.2 529.3,356.2 530.3,345.0 534.0,335.8 545.1,335.8 545.1,345.0 556.2,345.0 558.1,356.2 582.2,356.2 584.0,366.4 587.8,346.9 604.5,346.9 606.3,374.7 611.0,374.7 611.0,356.2 617.4,346.9 619.3,335.8 624.9,326.5 649.0,326.5 649.0,317.2 682.4,317.2 683.3,326.5 695.4,326.5 695.4,317.2 725.0,315.2 758.7,315.2 758.7,306.2 760.9,317.4 792.4,317.4 792.4,306.2 837.3,306.2 845.0,320.0 850.0,306.0 858.0,325.0 865.0,306.0 870.0,318.0 877.8,288.2 879.0,335.0 884.0,310.0 890.0,322.0 895.0,325.5 915.0,325.5 916.0,310.0 918.0,325.5 931.6,327.5 940.0,335.0 944.5,335.0 944.5,375.0 947.4,374.7 951.9,335.6 972.2,335.6 972.3,309.0 981.0,300.0 988.0,300.0 989.6,249.0 991.0,249.0 992.0,319.0 994.5,319.4 1012.8,327.5 1030.0,327.5 1033.0,270.6 1037.2,331.6 1045.3,311.2 1051.4,297.0 1098.0,297.0 1114.4,307.2 1150.0,307.2" fill="none" stroke="#99cc33" stroke-width="2" stroke-linejoin="miter"/><polyline points="88.0,345.0 90.2,351.9 93.6,369.0 98.8,370.8 100.5,368.2 103.0,374.2 104.8,386.3 108.2,418.0 110.8,406.9 116.0,405.2 119.4,398.3 126.3,345.0 129.7,337.3 134.8,321.0 140.0,307.2 144.3,322.7 149.5,350.2 155.5,357.9 158.0,370.0 160.6,355.3 165.8,324.4 170.9,314.0 174.4,314.0 177.8,304.6 181.3,314.0 188.1,331.3 195.0,355.3 198.4,366.5 203.6,362.2 208.8,388.8 212.2,370.8 218.2,388.8 222.5,362.2 227.7,338.1 232.8,322.7 236.3,309.8 240.6,316.6 242.3,310.6 247.4,327.8 255.2,370.8 256.9,379.4 260.3,370.8 262.9,381.0 267.2,350.2 270.6,349.3 273.2,331.3 279.2,345.9 291.3,324.4 301.6,307.2 308.8,312.3 315.8,301.8 319.3,321.0 328.1,326.4 336.0,349.2 340.4,333.4 350.0,342.2 356.2,321.0 365.0,332.5 372.0,314.0 377.3,322.8 379.0,316.7 386.1,333.4 396.7,373.8 403.7,394.9 408.1,390.5 414.2,391.4 421.3,365.0 430.0,340.4 438.8,333.4 440.6,321.1 445.9,330.8 461.7,366.8 472.2,410.7 482.8,380.8 489.8,365.0 495.0,382.1 498.7,397.0 508.0,346.9 512.6,330.2 519.1,315.3 524.7,309.8 531.2,321.8 537.7,307.0 544.2,330.2 554.4,333.9 563.6,363.6 569.2,352.4 575.7,367.3 580.3,349.7 584.0,363.6 591.5,348.7 596.1,350.6 598.0,372.9 604.5,388.6 606.3,363.6 611.9,319.0 617.4,291.2 625.8,262.5 633.2,315.3 636.0,300.5 644.3,283.8 650.8,249.5 660.1,273.6 663.8,262.5 673.1,252.3 682.4,237.4 688.0,267.1 694.4,280.1 698.0,315.2 702.5,290.4 709.2,288.2 716.0,259.0 718.2,250.0 723.8,250.0 728.3,287.1 732.8,273.6 739.6,309.6 742.9,310.7 747.4,325.3 753.0,307.3 760.9,263.5 767.6,259.0 771.0,253.4 778.9,270.2 782.2,298.3 787.9,297.2 794.6,272.5 802.5,264.6 812.6,297.2 818.2,315.2 823.8,309.6 826.1,299.4 832.8,298.3 835.1,318.5 845.2,356.7 850.8,348.9 859.8,302.8 865.4,319.7 871.0,338.8 875.5,384.8 880.0,380.3 883.4,397.2 886.7,362.4 891.2,344.4 895.0,339.7 899.1,327.5 903.1,280.8 909.2,294.0 913.3,270.6 921.4,261.5 923.4,265.5 931.6,323.4 939.7,378.3 944.8,380.3 947.8,360.0 954.9,338.7 960.0,362.0 964.0,356.0 967.1,363.0 971.2,337.7 978.3,317.3 981.3,309.2 983.4,317.3 989.5,313.3 992.5,321.4 999.6,319.4 1002.7,301.1 1010.8,310.2 1016.9,301.1 1024.0,315.3 1031.1,337.7 1037.2,339.7 1045.3,307.2 1053.4,274.7 1058.5,270.6 1063.6,281.8 1066.6,274.7 1071.7,282.8 1081.9,297.0 1087.0,274.7 1096.1,267.6 1098.1,259.5 1102.2,272.7 1108.3,270.6 1113.4,297.0 1120.5,303.1 1126.6,284.8 1132.7,278.8 1137.7,265.5 1140.8,277.7 1147.9,266.6 1149.9,272.7" fill="none" stroke="#336699" stroke-width="2.2" stroke-linejoin="miter"/><line x1="1130.5" y1="600" x2="1130.5" y2="627" stroke="#ff5555" stroke-width="1"/><polyline points="87.8,618.5 103.2,618.5 103.2,612.5 124.4,579.7 126.3,578.8 158.1,578.8 158.1,570.3 167.5,558.0 173.1,542.0 176.0,537.0 191.0,537.0 192.8,530.0 199.4,522.5 201.3,515.0 214.4,505.6 222.8,484.0 228.4,478.8 256.6,478.8 256.6,487.8 259.4,487.8 261.3,472.8 266.0,472.8 266.9,478.8 284.7,478.8 286.6,475.6 293.1,473.8 300.6,471.0 317.6,470.5 317.6,464.3 328.1,458.2 342.2,454.7 352.7,454.7 359.8,445.5 372.0,445.5 372.0,437.0 382.6,421.3 395.8,421.3 397.5,414.2 409.8,398.4 421.3,375.6 428.3,370.3 438.8,368.5 448.5,354.5 452.9,352.7 468.7,328.1 481.0,300.0 495.0,279.2 504.3,254.1 509.8,248.6 521.0,241.1 527.5,233.7 534.0,233.7 534.0,243.9 549.8,243.4 549.8,234.7 553.4,231.2 557.6,231.2 559.7,222.7 567.4,216.4 570.2,210.8 574.5,205.9 582.2,192.5 585.0,192.5 589.2,195.3 589.9,203.8 596.3,203.8 596.3,192.5 604.7,191.8 605.4,185.5 614.5,185.5 616.0,197.4 635.6,197.4 636.3,203.0 639.9,203.8 641.3,212.2 646.9,217.8 655.3,227.7 659.5,234.0 665.9,234.0 668.0,240.3 672.9,245.2 673.6,248.8 684.2,248.8 690.5,260.0 700.2,271.3 711.5,290.4 725.0,308.4 738.4,317.4 747.4,328.7 758.7,334.3 764.3,345.5 774.4,345.5 781.1,360.1 787.9,361.2 801.3,375.8 808.1,377.0 814.8,380.3 821.6,386.0 832.8,405.0 838.4,416.3 846.3,418.5 848.5,409.6 853.0,406.2 860.9,406.2 863.1,418.5 877.8,438.8 891.2,436.5 895.7,445.5 901.4,445.5 902.4,450.7 908.6,454.8 912.8,463.1 919.0,470.4 933.5,470.4 933.5,475.5 945.9,475.5 952.1,482.8 965.6,482.8 968.7,488.0 972.8,500.4 979.0,514.9 984.2,512.8 990.4,530.4 1020.4,530.4 1021.5,522.1 1025.6,522.1 1028.7,535.6 1032.9,548.0 1039.0,549.0 1047.4,558.4 1053.6,570.8 1056.7,576.0 1063.9,577.0 1065.0,578.7 1083.6,578.7 1086.7,584.2 1105.3,584.2 1106.4,587.3 1114.6,587.3 1115.7,578.7 1124.0,578.7 1126.0,589.4 1132.2,601.8 1141.6,612.2 1149.8,621.5" fill="none" stroke="#9a2636" stroke-width="1.9" stroke-linejoin="miter"/>
<rect x="87.5" y="140.5" width="1062" height="496" fill="none" stroke="#222" stroke-width="1"/>
<line x1="83" y1="637.5" x2="88" y2="637.5" stroke="#222" stroke-width="2"/>
<line x1="81" y1="600.5" x2="88" y2="600.5" stroke="#222" stroke-width="2"/>
<line x1="83" y1="563.5" x2="88" y2="563.5" stroke="#222" stroke-width="2"/>
<line x1="81" y1="525.5" x2="88" y2="525.5" stroke="#222" stroke-width="2"/>
<line x1="83" y1="488.5" x2="88" y2="488.5" stroke="#222" stroke-width="2"/>
<line x1="81" y1="451.5" x2="88" y2="451.5" stroke="#222" stroke-width="2"/>
<line x1="83" y1="414.5" x2="88" y2="414.5" stroke="#222" stroke-width="2"/>
<line x1="81" y1="376.5" x2="88" y2="376.5" stroke="#222" stroke-width="2"/>
<line x1="83" y1="339.5" x2="88" y2="339.5" stroke="#222" stroke-width="2"/>
<line x1="81" y1="302.5" x2="88" y2="302.5" stroke="#222" stroke-width="2"/>
<line x1="83" y1="264.5" x2="88" y2="264.5" stroke="#222" stroke-width="2"/>
<line x1="81" y1="227.5" x2="88" y2="227.5" stroke="#222" stroke-width="2"/>
<line x1="83" y1="190.5" x2="88" y2="190.5" stroke="#222" stroke-width="2"/>
<line x1="81" y1="153.5" x2="88" y2="153.5" stroke="#222" stroke-width="2"/>
<line x1="88" y1="606.5" x2="93" y2="606.5" stroke="#222" stroke-width="2"/>
<line x1="88" y1="575.5" x2="95" y2="575.5" stroke="#222" stroke-width="2"/>
<line x1="88" y1="545.5" x2="93" y2="545.5" stroke="#222" stroke-width="2"/>
<line x1="88" y1="515.5" x2="95" y2="515.5" stroke="#222" stroke-width="2"/>
<line x1="88" y1="485.5" x2="93" y2="485.5" stroke="#222" stroke-width="2"/>
<line x1="88" y1="455.5" x2="95" y2="455.5" stroke="#222" stroke-width="2"/>
<line x1="88" y1="424.5" x2="93" y2="424.5" stroke="#222" stroke-width="2"/>
<line x1="88" y1="394.5" x2="95" y2="394.5" stroke="#222" stroke-width="2"/>
<line x1="88" y1="364.5" x2="93" y2="364.5" stroke="#222" stroke-width="2"/>
<line x1="88" y1="334.5" x2="95" y2="334.5" stroke="#222" stroke-width="2"/>
<line x1="88" y1="304.5" x2="93" y2="304.5" stroke="#222" stroke-width="2"/>
<line x1="88" y1="273.5" x2="95" y2="273.5" stroke="#222" stroke-width="2"/>
<line x1="88" y1="243.5" x2="93" y2="243.5" stroke="#222" stroke-width="2"/>
<line x1="88" y1="213.5" x2="95" y2="213.5" stroke="#222" stroke-width="2"/>
<line x1="88" y1="183.5" x2="93" y2="183.5" stroke="#222" stroke-width="2"/>
<line x1="88" y1="153.5" x2="95" y2="153.5" stroke="#222" stroke-width="2"/>
<line x1="1145" y1="540.5" x2="1150" y2="540.5" stroke="#222" stroke-width="2"/>
<line x1="1145" y1="443.5" x2="1150" y2="443.5" stroke="#222" stroke-width="2"/>
<line x1="1145" y1="346.5" x2="1150" y2="346.5" stroke="#222" stroke-width="2"/>
<line x1="1145" y1="249.5" x2="1150" y2="249.5" stroke="#222" stroke-width="2"/>
<line x1="1145" y1="152.5" x2="1150" y2="152.5" stroke="#222" stroke-width="2"/>
<line x1="1150" y1="485.5" x2="1158" y2="485.5" stroke="#222" stroke-width="2"/>
<line x1="1150" y1="334.5" x2="1158" y2="334.5" stroke="#222" stroke-width="2"/>
<line x1="1150" y1="182.5" x2="1158" y2="182.5" stroke="#222" stroke-width="2"/>
<line x1="87.5" y1="636" x2="87.5" y2="647" stroke="#222" stroke-width="2"/>
<line x1="132.5" y1="636" x2="132.5" y2="642" stroke="#222" stroke-width="2"/>
<line x1="176.5" y1="636" x2="176.5" y2="647" stroke="#222" stroke-width="2"/>
<line x1="220.5" y1="636" x2="220.5" y2="642" stroke="#222" stroke-width="2"/>
<line x1="264.5" y1="636" x2="264.5" y2="647" stroke="#222" stroke-width="2"/>
<line x1="309.5" y1="636" x2="309.5" y2="642" stroke="#222" stroke-width="2"/>
<line x1="353.5" y1="636" x2="353.5" y2="647" stroke="#222" stroke-width="2"/>
<line x1="397.5" y1="636" x2="397.5" y2="642" stroke="#222" stroke-width="2"/>
<line x1="441.5" y1="636" x2="441.5" y2="647" stroke="#222" stroke-width="2"/>
<line x1="486.5" y1="636" x2="486.5" y2="642" stroke="#222" stroke-width="2"/>
<line x1="530.5" y1="636" x2="530.5" y2="647" stroke="#222" stroke-width="2"/>
<line x1="574.5" y1="636" x2="574.5" y2="642" stroke="#222" stroke-width="2"/>
<line x1="618.5" y1="636" x2="618.5" y2="647" stroke="#222" stroke-width="2"/>
<line x1="663.5" y1="636" x2="663.5" y2="642" stroke="#222" stroke-width="2"/>
<line x1="707.5" y1="636" x2="707.5" y2="647" stroke="#222" stroke-width="2"/>
<line x1="751.5" y1="636" x2="751.5" y2="642" stroke="#222" stroke-width="2"/>
<line x1="795.5" y1="636" x2="795.5" y2="647" stroke="#222" stroke-width="2"/>
<line x1="840.5" y1="636" x2="840.5" y2="642" stroke="#222" stroke-width="2"/>
<line x1="884.5" y1="636" x2="884.5" y2="647" stroke="#222" stroke-width="2"/>
<line x1="928.5" y1="636" x2="928.5" y2="642" stroke="#222" stroke-width="2"/>
<line x1="972.5" y1="636" x2="972.5" y2="647" stroke="#222" stroke-width="2"/>
<line x1="1017.5" y1="636" x2="1017.5" y2="642" stroke="#222" stroke-width="2"/>
<line x1="1061.5" y1="636" x2="1061.5" y2="647" stroke="#222" stroke-width="2"/>
<line x1="1105.5" y1="636" x2="1105.5" y2="642" stroke="#222" stroke-width="2"/>
<line x1="1149.5" y1="636" x2="1149.5" y2="647" stroke="#222" stroke-width="2"/>
</svg>
<div class="t" style="right:1203px;top:147.03px;font-size:16.5px;color:#a52a35;font-weight:normal;">180</div>
<div class="t" style="right:1203px;top:221.03px;font-size:16.5px;color:#a52a35;font-weight:normal;">160</div>
<div class="t" style="right:1203px;top:296.03px;font-size:16.5px;color:#a52a35;font-weight:normal;">140</div>
<div class="t" style="right:1203px;top:370.03px;font-size:16.5px;color:#a52a35;font-weight:normal;">120</div>
<div class="t" style="right:1203px;top:445.03px;font-size:16.5px;color:#a52a35;font-weight:normal;">100</div>
<div class="t" style="right:1203px;top:519.03px;font-size:16.5px;color:#a52a35;font-weight:normal;">80</div>
<div class="t" style="right:1203px;top:594.03px;font-size:16.5px;color:#a52a35;font-weight:normal;">60</div>
<div class="t" style="left:99px;top:568.03px;font-size:16.5px;color:#882a33;font-weight:normal;">180</div>
<div class="t" style="left:99px;top:508.03px;font-size:16.5px;color:#882a33;font-weight:normal;">200</div>
<div class="t" style="left:99px;top:448.03px;font-size:16.5px;color:#882a33;font-weight:normal;">220</div>
<div class="t" style="left:99px;top:387.03px;font-size:16.5px;color:#882a33;font-weight:normal;">240</div>
<div class="t" style="left:99px;top:327.03px;font-size:16.5px;color:#882a33;font-weight:normal;">260</div>
<div class="t" style="left:99px;top:266.03px;font-size:16.5px;color:#882a33;font-weight:normal;">280</div>
<div class="t" style="left:99px;top:206.03px;font-size:16.5px;color:#882a33;font-weight:normal;">300</div>
<div class="t" style="left:99px;top:146.03px;font-size:16.5px;color:#882a33;font-weight:normal;">320</div>
<div class="t" style="right:140px;top:581.03px;font-size:16.5px;color:#a4d044;font-weight:normal;">55</div>
<div class="t" style="right:140px;top:533.03px;font-size:16.5px;color:#a4d044;font-weight:normal;">60</div>
<div class="t" style="right:140px;top:484.03px;font-size:16.5px;color:#a4d044;font-weight:normal;">65</div>
<div class="t" style="right:140px;top:436.03px;font-size:16.5px;color:#a4d044;font-weight:normal;">70</div>
<div class="t" style="right:140px;top:387.03px;font-size:16.5px;color:#a4d044;font-weight:normal;">75</div>
<div class="t" style="right:140px;top:339.03px;font-size:16.5px;color:#a4d044;font-weight:normal;">80</div>
<div class="t" style="right:140px;top:291.03px;font-size:16.5px;color:#a4d044;font-weight:normal;">85</div>
<div class="t" style="right:140px;top:242.03px;font-size:16.5px;color:#a4d044;font-weight:normal;">90</div>
<div class="t" style="right:140px;top:194.03px;font-size:16.5px;color:#a4d044;font-weight:normal;">95</div>
<div class="t" style="right:140px;top:145.03px;font-size:16.5px;color:#a4d044;font-weight:normal;">100</div>
<div class="t" style="left:1162px;top:478.03px;font-size:16.5px;color:#2c5580;font-weight:normal;">5</div>
<div class="t" style="left:1162px;top:327.03px;font-size:16.5px;color:#2c5580;font-weight:normal;">10</div>
<div class="t" style="left:1162px;top:175.03px;font-size:16.5px;color:#2c5580;font-weight:normal;">15</div>
<div class="t" style="left:-213px;width:600px;text-align:center;top:651.53px;font-size:16.5px;color:#222;font-weight:normal;">0.0</div>
<div class="t" style="left:-124px;width:600px;text-align:center;top:651.53px;font-size:16.5px;color:#222;font-weight:normal;">0.5</div>
<div class="t" style="left:-36px;width:600px;text-align:center;top:651.53px;font-size:16.5px;color:#222;font-weight:normal;">1.0</div>
<div class="t" style="left:53px;width:600px;text-align:center;top:651.53px;font-size:16.5px;color:#222;font-weight:normal;">1.5</div>
<div class="t" style="left:141px;width:600px;text-align:center;top:651.53px;font-size:16.5px;color:#222;font-weight:normal;">2.0</div>
<div class="t" style="left:230px;width:600px;text-align:center;top:651.53px;font-size:16.5px;color:#222;font-weight:normal;">2.5</div>
<div class="t" style="left:318px;width:600px;text-align:center;top:651.53px;font-size:16.5px;color:#222;font-weight:normal;">3.0</div>
<div class="t" style="left:407px;width:600px;text-align:center;top:651.53px;font-size:16.5px;color:#222;font-weight:normal;">3.5</div>
<div class="t" style="left:495px;width:600px;text-align:center;top:651.53px;font-size:16.5px;color:#222;font-weight:normal;">4.0</div>
<div class="t" style="left:584px;width:600px;text-align:center;top:651.53px;font-size:16.5px;color:#222;font-weight:normal;">4.5</div>
<div class="t" style="left:672px;width:600px;text-align:center;top:651.53px;font-size:16.5px;color:#222;font-weight:normal;">5.0</div>
<div class="t" style="left:761px;width:600px;text-align:center;top:651.53px;font-size:16.5px;color:#222;font-weight:normal;">5.5</div>
<div class="t" style="left:849px;width:600px;text-align:center;top:651.53px;font-size:16.5px;color:#222;font-weight:normal;">6.0</div>
<div class="t" style="left:87.5px;top:101.61px;font-size:17px;color:#882a33;font-weight:normal;">H&ouml;he [m]</div>
<div class="t" style="left:30px;top:118.11px;font-size:17px;color:#a52a35;font-weight:normal;">HF [S/min]</div>
<div class="t" style="right:136px;top:101.61px;font-size:17px;color:#8fbf30;font-weight:normal;">Tritt-/Schrittfrequenz [U/min]</div>
<div class="t" style="left:1155px;top:118.11px;font-size:17px;color:#2c5580;font-weight:normal;">Geschwind. [km/h]</div>
<div class="t" style="left:1174px;top:636.03px;font-size:16.5px;color:#333;font-weight:normal;">Distanz</div>
<div class="t" style="left:1174px;top:659.53px;font-size:16.5px;color:#333;font-weight:normal;">[km]</div>
<div class="t" style="left:88px;top:677.23px;font-size:14.5px;color:#333333;font-weight:normal;">Cursorwert:</div>
<div class="t" style="left:88px;top:698.23px;font-size:14.5px;color:#333333;font-weight:normal;">Zeit: 0:35:25</div>
<div class="t" style="left:88px;top:718.23px;font-size:14.5px;color:#a8303a;font-weight:normal;">HF: 0 S/min</div>
<div class="t" style="left:88px;top:738.23px;font-size:14.5px;color:#a8303a;font-weight:normal;">Kalorienrate: 0 kcal/60Min</div>
<div class="t" style="left:88px;top:758.23px;font-size:14.5px;color:#2e5a88;font-weight:normal;">Geschwindigkeit: 11,9 km/h</div>
<div class="t" style="left:295px;top:677.23px;font-size:14.5px;color:#333333;font-weight:normal;">Distanz: 6.016 km</div>
<div class="t" style="left:295px;top:698.23px;font-size:14.5px;color:#9cc040;font-weight:normal;">Tritt-/Schrittfrequenz: 79 U/min</div>
<div class="t" style="left:295px;top:718.23px;font-size:14.5px;color:#883040;font-weight:normal;">H&ouml;he:&nbsp; 165 m</div>
<div class="t" style="left:295px;top:738.23px;font-size:14.5px;color:#333333;font-weight:normal;">Aufstieg: 150 m</div>
<div class="t" style="left:295px;top:758.23px;font-size:14.5px;color:#333333;font-weight:normal;">Abstieg: 147 m</div>
<div class="r" style="left:751px;top:681px;width:289px;height:86px;background:#a0a0a0;"></div>
<div class="r" style="left:749px;top:678px;width:290px;height:87px;background:#fff;border:1px solid #111;"></div>
<div class="t" style="left:782px;top:690.23px;font-size:14.5px;color:#6b3333;font-weight:normal;">0:09:35</div>
<div class="t" style="left:845px;top:690.23px;font-size:14.5px;color:#6b3333;font-weight:normal;">(27 %)</div>
<div class="t" style="right:311px;top:690.23px;font-size:14.5px;color:#6b3333;font-weight:normal;">1.476 km</div>
<div class="t" style="left:985px;top:690.23px;font-size:14.5px;color:#6b3333;font-weight:normal;">(25 %)</div>
<div class="t" style="left:782px;top:715.73px;font-size:14.5px;color:#6b3333;font-weight:normal;">0:17:10</div>
<div class="t" style="left:845px;top:715.73px;font-size:14.5px;color:#6b3333;font-weight:normal;">(49 %)</div>
<div class="t" style="right:311px;top:715.73px;font-size:14.5px;color:#6b3333;font-weight:normal;">2.933 km</div>
<div class="t" style="left:985px;top:715.73px;font-size:14.5px;color:#6b3333;font-weight:normal;">(49 %)</div>
<div class="t" style="left:782px;top:741.23px;font-size:14.5px;color:#6b3333;font-weight:normal;">0:08:35</div>
<div class="t" style="left:845px;top:741.23px;font-size:14.5px;color:#6b3333;font-weight:normal;">(24 %)</div>
<div class="t" style="right:311px;top:741.23px;font-size:14.5px;color:#6b3333;font-weight:normal;">1.589 km</div>
<div class="t" style="left:985px;top:741.23px;font-size:14.5px;color:#6b3333;font-weight:normal;">(26 %)</div>
<svg width="20" height="80" style="left:752px;top:684px"><path d="M5 16 L15 6 M10 6 L15 6 L15 11" stroke="#33cc99" stroke-width="1.2" fill="none"/><path d="M4 37 L16 37 M12 33 L16 37 L12 41" stroke="#33cc99" stroke-width="1.2" fill="none"/><path d="M5 57 L15 67 M15 62 L15 67 L10 67" stroke="#33cc99" stroke-width="1.2" fill="none"/></svg>
<div class="r" style="left:3px;top:786px;width:1276px;height:190px;background:#d5d5d5;"></div>
<div class="r" style="left:3px;top:786px;width:123px;height:32px;background:#e3e3e3;"></div>
<div class="r" style="left:473px;top:786px;width:121px;height:32px;background:#e3e3e3;"></div>
<div class="r" style="left:3px;top:818px;width:123px;height:31px;background:#e3e3e3;"></div>
<div class="r" style="left:473px;top:818px;width:121px;height:31px;background:#e3e3e3;"></div>
<div class="r" style="left:3px;top:849px;width:123px;height:32px;background:#e3e3e3;"></div>
<div class="r" style="left:473px;top:849px;width:121px;height:32px;background:#e3e3e3;"></div>
<div class="r" style="left:3px;top:881px;width:123px;height:31px;background:#e3e3e3;"></div>
<div class="r" style="left:473px;top:881px;width:121px;height:31px;background:#e3e3e3;"></div>
<div class="r" style="left:3px;top:912px;width:123px;height:63px;background:#e3e3e3;"></div>
<div class="r" style="left:763px;top:786px;width:145px;height:189px;background:#e3e3e3;"></div>
<div class="r" style="left:1029px;top:786px;width:121px;height:32px;background:#e3e3e3;"></div>
<div class="r" style="left:1029px;top:818px;width:121px;height:31px;background:#e3e3e3;"></div>
<div class="r" style="left:1029px;top:849px;width:121px;height:32px;background:#e3e3e3;"></div>
<div class="r" style="left:1029px;top:881px;width:121px;height:31px;background:#e3e3e3;"></div>
<div class="r" style="left:1029px;top:912px;width:121px;height:32px;background:#e3e3e3;"></div>
<svg width="1280" height="1024" style="left:0;top:0">
<line x1="3" y1="786.5" x2="1279" y2="786.5" stroke="#8a8a8a" stroke-width="1"/>
<line x1="3" y1="975.5" x2="1279" y2="975.5" stroke="#8a8a8a" stroke-width="1"/>
<line x1="3" y1="818.5" x2="1279" y2="818.5" stroke="#8a8a8a" stroke-width="1"/>
<line x1="3" y1="849.5" x2="1279" y2="849.5" stroke="#8a8a8a" stroke-width="1"/>
<line x1="3" y1="881.5" x2="1279" y2="881.5" stroke="#8a8a8a" stroke-width="1"/>
<line x1="3" y1="912.5" x2="1279" y2="912.5" stroke="#8a8a8a" stroke-width="1"/>
<line x1="763" y1="944.5" x2="1150" y2="944.5" stroke="#8a8a8a" stroke-width="1"/>
<line x1="763" y1="944.5" x2="1279" y2="944.5" stroke="#8a8a8a" stroke-width="1"/>
<line x1="3.5" y1="786" x2="3.5" y2="976" stroke="#8a8a8a" stroke-width="1"/>
<line x1="126.5" y1="786" x2="126.5" y2="976" stroke="#8a8a8a" stroke-width="1"/>
<line x1="473.5" y1="786" x2="473.5" y2="913" stroke="#8a8a8a" stroke-width="1"/>
<line x1="594.5" y1="786" x2="594.5" y2="913" stroke="#8a8a8a" stroke-width="1"/>
<line x1="763.5" y1="786" x2="763.5" y2="976" stroke="#8a8a8a" stroke-width="1"/>
<line x1="908.5" y1="786" x2="908.5" y2="976" stroke="#8a8a8a" stroke-width="1"/>
<line x1="1029.5" y1="786" x2="1029.5" y2="945" stroke="#8a8a8a" stroke-width="1"/>
<line x1="1150.5" y1="786" x2="1150.5" y2="945" stroke="#8a8a8a" stroke-width="1"/>
<line x1="1278.5" y1="786" x2="1278.5" y2="976" stroke="#8a8a8a" stroke-width="1"/>
</svg>
<div class="t" style="left:10px;top:798.36px;font-size:16.7px;color:#333333;font-weight:normal;">Person</div>
<div class="t" style="left:133px;top:798.36px;font-size:16.7px;color:#333333;font-weight:normal;">J&uuml;rgen Wolter</div>
<div class="t" style="left:481px;top:798.36px;font-size:16.7px;color:#333333;font-weight:normal;">Datum</div>
<div class="t" style="left:601px;top:798.36px;font-size:16.7px;color:#333333;font-weight:normal;">05.02.2012</div>
<div class="t" style="left:770px;top:798.36px;font-size:16.7px;color:#333333;width:138px;overflow:hidden;">Herzfrequenz</div>
<div class="t" style="left:10px;top:830.36px;font-size:16.7px;color:#333333;font-weight:normal;">Training</div>
<div class="t" style="left:133px;top:830.36px;font-size:16.7px;color:#333333;font-weight:normal;">05.02.2012 12:00</div>
<div class="t" style="left:481px;top:830.36px;font-size:16.7px;color:#333333;font-weight:normal;">Zeit</div>
<div class="t" style="left:601px;top:830.36px;font-size:16.7px;color:#333333;font-weight:normal;">09:13:58</div>
<div class="t" style="left:770px;top:830.36px;font-size:16.7px;color:#333333;width:138px;overflow:hidden;">Geschwindigkeit</div>
<div class="t" style="left:668px;width:600px;text-align:center;top:830.36px;font-size:16.7px;color:#333333;font-weight:normal;">10,2 / 13,2</div>
<div class="t" style="left:10px;top:861.36px;font-size:16.7px;color:#333333;font-weight:normal;">Sportart</div>
<div class="t" style="left:133px;top:861.36px;font-size:16.7px;color:#333333;font-weight:normal;">Laufen</div>
<div class="t" style="left:481px;top:861.36px;font-size:16.7px;color:#333333;font-weight:normal;">Dauer</div>
<div class="t" style="left:601px;top:861.36px;font-size:16.7px;color:#333333;font-weight:normal;">0:35:25.0</div>
<div class="t" style="left:770px;top:861.36px;font-size:16.7px;color:#333333;width:138px;overflow:hidden;">Tritt-/Schrittfrequenz</div>
<div class="t" style="left:668px;width:600px;text-align:center;top:861.36px;font-size:16.7px;color:#333333;font-weight:normal;">81 / 90</div>
<div class="t" style="left:10px;top:893.36px;font-size:16.7px;color:#333333;font-weight:normal;"></div>
<div class="t" style="left:133px;top:893.36px;font-size:16.7px;color:#333333;font-weight:normal;"></div>
<div class="t" style="left:481px;top:893.36px;font-size:16.7px;color:#333333;font-weight:normal;">Distanz</div>
<div class="t" style="left:601px;top:893.36px;font-size:16.7px;color:#333333;font-weight:normal;">6.0 km</div>
<div class="t" style="left:10px;top:924.86px;font-size:16.7px;color:#333333;font-weight:normal;">Anmerkung</div>
<div class="t" style="left:770px;top:924.86px;font-size:16.7px;color:#333333;font-weight:normal;">Aufstieg</div>
<div class="t" style="left:668px;width:600px;text-align:center;top:924.86px;font-size:16.7px;color:#333333;font-weight:normal;">150 (-2.8%)</div>
<div class="t" style="left:770px;top:956.36px;font-size:16.7px;color:#333333;font-weight:normal;">Auswahl</div>
<div class="t" style="left:915px;top:956.36px;font-size:16.7px;color:#333333;font-weight:normal;">0:00:00 - 0:35:25 (0:35:25.0)</div>
<svg width="30" height="100" style="left:880px;top:790px"><line x1="6" y1="11.5" x2="22" y2="11.5" stroke="#b03030" stroke-width="2"/><line x1="6" y1="43" x2="22" y2="43" stroke="#336699" stroke-width="2"/><line x1="6" y1="74.5" x2="24" y2="74.5" stroke="#99cc33" stroke-width="2"/></svg>
<div class="r" style="left:0px;top:976px;width:1280px;height:4px;background:#ffffff;"></div>
<div class="r" style="left:0px;top:980px;width:1280px;height:16px;background:#d0d0d0;"></div>
<div class="r" style="left:0px;top:980px;width:1280px;height:1px;background:#f0f0f0;"></div>
<div class="r" style="left:0px;top:995px;width:1280px;height:1px;background:#404040;"></div>
<div class="r" style="left:1px;top:981px;width:15px;height:14px;background:#d0d0d0;border-top:1px solid #fff;border-left:1px solid #fff;border-right:1px solid #404040;border-bottom:1px solid #404040;"></div>
<div class="r" style="left:1263px;top:981px;width:16px;height:14px;background:#d0d0d0;border-top:1px solid #fff;border-left:1px solid #fff;border-right:1px solid #404040;border-bottom:1px solid #404040;"></div>
<svg width="1280" height="20" style="left:0;top:980px"><path d="M5 8 L9 4 L9 12 Z" fill="#000"/><path d="M1273 8 L1269 4 L1269 12 Z" fill="#000"/></svg>
<div class="r" style="left:0px;top:996px;width:1280px;height:1px;background:#e8e8e8;"></div>
<div class="r" style="left:0px;top:997px;width:1280px;height:27px;background:#d0d0d0;"></div>
<div class="r" style="left:0px;top:997px;width:1280px;height:1px;background:#ffffff;"></div>
<div class="r" style="left:2px;top:1000px;width:52px;height:22px;background:#d0d0d0;border-top:1px solid #fff;border-left:1px solid #fff;border-right:1px solid #404040;border-bottom:1px solid #404040;"></div>
<svg width="20" height="18" style="left:5px;top:1002px"><path d="M2 3 Q5 1 8 3 L7 8 Q4 7 1 8 Z" fill="#e8501c"/><path d="M9 3 Q12 5 16 3 L15 8 Q12 9 8 8 Z" fill="#4cae32"/><path d="M1 9 Q4 8 7 9 L6 14 Q3 13 0 14 Z" fill="#1f6fd0"/><path d="M8 9 Q11 10 15 9 L14 14 Q11 15 7 14 Z" fill="#f5c01a"/></svg>
<div class="t" style="left:21px;top:1006.84px;font-size:12px;color:#000;font-weight:bold;">Start</div>
<div class="r" style="left:60px;top:1002px;width:2px;height:18px;background:#fff;border-left:1px solid #808080;"></div>
<svg width="260" height="27" style="left:0;top:997px"><rect x="71" y="6" width="15" height="14" rx="3" fill="#2a6ad0"/><rect x="73" y="8" width="10" height="10" rx="2" fill="#e8f0ff"/><path d="M76 10 L81 10 L81 12 L78 12 L78 15 L81 15" stroke="#2a6ad0" stroke-width="1.5" fill="none"/><circle cx="103" cy="13" r="6.5" fill="#3aa0e8"/><circle cx="103" cy="13" r="3" fill="#e8f4ff"/><rect x="98" y="12" width="10" height="2" fill="#3aa0e8"/><path d="M95 19 Q100 4 112 6" stroke="#f0b020" stroke-width="1.5" fill="none"/><circle cx="125" cy="13" r="7.5" fill="#e8700a"/><circle cx="127" cy="11" r="4.5" fill="#3a5ab8"/><path d="M118 14 Q121 21 129 20 Q123 17 125 12 Z" fill="#f8a020"/><circle cx="147" cy="13" r="7.5" fill="#2060b8"/><path d="M141 15 Q147 10 153 15 Q147 19 141 15 Z" fill="#e8e8f0"/><path d="M164 8 L169 8 L171 10 L178 10 L178 19 L164 19 Z" fill="#e8c050"/><rect x="166" y="11" width="11" height="7" fill="#f8f0c0"/><circle cx="194" cy="13" r="7.5" fill="#e8e8e8"/><circle cx="194" cy="13" r="6" fill="#d83838"/><path d="M190 12 L194 16 L198 12" stroke="#fff" stroke-width="1.5" fill="none"/><path d="M231 10 L234 13 L231 16 M235 10 L238 13 L235 16" stroke="#000" stroke-width="1.5" fill="none"/></svg>
<div class="r" style="left:246px;top:1002px;width:2px;height:18px;background:#fff;border-left:1px solid #808080;"></div>
<div class="r" style="left:252px;top:1000px;width:73px;height:22px;background:#d0d0d0;border-top:1px solid #fff;border-left:1px solid #fff;border-right:1px solid #404040;border-bottom:1px solid #404040;"></div>
<svg width="17" height="17" style="left:257px;top:1003px"><circle cx="6" cy="11" r="3" fill="#909090"/><circle cx="10" cy="6" r="3" fill="#a8a8a8"/><circle cx="11" cy="12" r="3.5" fill="#808080"/></svg>
<div class="t" style="left:276px;top:1006.69px;font-size:11px;color:#000;font-weight:normal;">Garmin...</div>
<div class="r" style="left:328px;top:1000px;width:73px;height:22px;background:#d0d0d0;border-top:1px solid #fff;border-left:1px solid #fff;border-right:1px solid #404040;border-bottom:1px solid #404040;"></div>
<svg width="17" height="17" style="left:333px;top:1003px"><circle cx="8" cy="8" r="7" fill="#2060b8"/><path d="M2 10 Q8 5 14 10 Q8 14 2 10 Z" fill="#e8e8f0"/></svg>
<div class="t" style="left:352px;top:1006.69px;font-size:11px;color:#000;font-weight:normal;">Postei...</div>
<div class="r" style="left:404px;top:1000px;width:73px;height:22px;background:#d0d0d0;border-top:1px solid #fff;border-left:1px solid #fff;border-right:1px solid #404040;border-bottom:1px solid #404040;"></div>
<svg width="17" height="17" style="left:409px;top:1003px"><circle cx="8" cy="8" r="7.5" fill="#e8700a"/><circle cx="10" cy="6" r="4.5" fill="#3a5ab8"/><path d="M1 9 Q4 16 12 15 Q6 12 8 7 Z" fill="#f8a020"/></svg>
<div class="t" style="left:428px;top:1006.69px;font-size:11px;color:#000;font-weight:normal;">Garmin...</div>
<div class="r" style="left:480px;top:1000px;width:73px;height:22px;background:#d0d0d0;border-top:1px solid #fff;border-left:1px solid #fff;border-right:1px solid #404040;border-bottom:1px solid #404040;"></div>
<svg width="17" height="17" style="left:485px;top:1003px"><rect x="3" y="1" width="11" height="14" fill="#fff" stroke="#708090" stroke-width="0.8"/><rect x="1" y="4" width="8" height="8" fill="#208040"/><path d="M3 6 L7 10 M7 6 L3 10" stroke="#fff" stroke-width="1.2"/></svg>
<div class="t" style="left:504px;top:1006.69px;font-size:11px;color:#000;font-weight:normal;">PZA_3...</div>
<div class="r" style="left:556px;top:1000px;width:73px;height:22px;background:#d0d0d0;border-top:1px solid #fff;border-left:1px solid #fff;border-right:1px solid #404040;border-bottom:1px solid #404040;"></div>
<svg width="17" height="17" style="left:561px;top:1003px"><path d="M1 3 L6 3 L8 5 L15 5 L15 14 L1 14 Z" fill="#e8c050"/><rect x="3" y="6" width="11" height="7" fill="#f8f0c0"/></svg>
<div class="t" style="left:580px;top:1006.69px;font-size:11px;color:#000;font-weight:normal;">BL201...</div>
<div class="r" style="left:632px;top:1000px;width:73px;height:22px;background:#d0d0d0;border-top:1px solid #fff;border-left:1px solid #fff;border-right:1px solid #404040;border-bottom:1px solid #404040;"></div>
<svg width="17" height="17" style="left:637px;top:1003px"><rect x="3" y="1" width="11" height="14" fill="#fff" stroke="#708090" stroke-width="0.8"/><rect x="1" y="4" width="8" height="8" fill="#2850a8"/><path d="M2 6 L3.5 10 L5 7 L6.5 10 L8 6" stroke="#fff" stroke-width="0.9" fill="none"/></svg>
<div class="t" style="left:656px;top:1006.69px;font-size:11px;color:#000;font-weight:normal;">Beitra...</div>
<div class="r" style="left:708px;top:1000px;width:73px;height:22px;background:#d0d0d0;border-top:1px solid #fff;border-left:1px solid #fff;border-right:1px solid #404040;border-bottom:1px solid #404040;"></div>
<svg width="17" height="17" style="left:713px;top:1003px"><rect x="3" y="1" width="11" height="14" fill="#fff" stroke="#708090" stroke-width="0.8"/><rect x="1" y="4" width="8" height="8" fill="#2850a8"/><path d="M2 6 L3.5 10 L5 7 L6.5 10 L8 6" stroke="#fff" stroke-width="0.9" fill="none"/></svg>
<div class="t" style="left:732px;top:1006.69px;font-size:11px;color:#000;font-weight:normal;">Dokum...</div>
<div class="r" style="left:784px;top:1000px;width:73px;height:22px;background:#e8e6e0;border-top:1px solid #404040;border-left:1px solid #404040;border-right:1px solid #fff;border-bottom:1px solid #fff;"></div>
<svg width="17" height="17" style="left:789px;top:1003px"><path d="M8 15 L1.5 8 Q-1 3 3.5 1.5 Q6.5 1 8 4 Q9.5 1 12.5 1.5 Q17 3 14.5 8 Z" fill="#e03040" stroke="#a01828" stroke-width="0.8"/><ellipse cx="5" cy="5" rx="2" ry="1.5" fill="#ffb0b8"/></svg>
<div class="t" style="left:808px;top:1006.69px;font-size:11px;color:#000;font-weight:bold;">Polar ...</div>
<div class="r" style="left:862px;top:1002px;width:2px;height:18px;background:#fff;border-left:1px solid #808080;"></div>
<div class="r" style="left:873px;top:1000px;width:287px;height:22px;background:#fff;border:1px solid #a0a0a0;"></div>
<div class="t" style="left:878px;top:1006.93px;font-size:11.3px;color:#808080;font-weight:normal;">Desktop durchsuchen</div>
<div class="r" style="left:1160px;top:1000px;width:24px;height:22px;background:#e8e8e8;border:1px solid #a0a0a0;border-left:none"></div>
<svg width="20" height="20" style="left:1163px;top:1002px"><circle cx="11" cy="7" r="4.5" stroke="#2060c0" stroke-width="2" fill="#cfe4ff"/><line x1="8" y1="10" x2="4" y2="15" stroke="#2060c0" stroke-width="2.5"/></svg>
<div class="r" style="left:1201px;top:1000px;width:79px;height:22px;background:#d0d0d0;border-top:1px solid #808080;border-left:1px solid #808080;"></div>
<div class="t" style="left:1205px;top:1006.84px;font-size:12px;color:#000;font-weight:bold;">&laquo;</div>
<svg width="20" height="20" style="left:1218px;top:1002px"><circle cx="8" cy="8" r="5" fill="#909090"/><circle cx="12" cy="12" r="5" fill="#a0a0a0"/><line x1="3" y1="17" x2="17" y2="3" stroke="#e02020" stroke-width="2"/></svg>
<div class="t" style="left:1242px;top:1006.93px;font-size:11.3px;color:#000;font-weight:normal;">12:34</div>
</body></html>
